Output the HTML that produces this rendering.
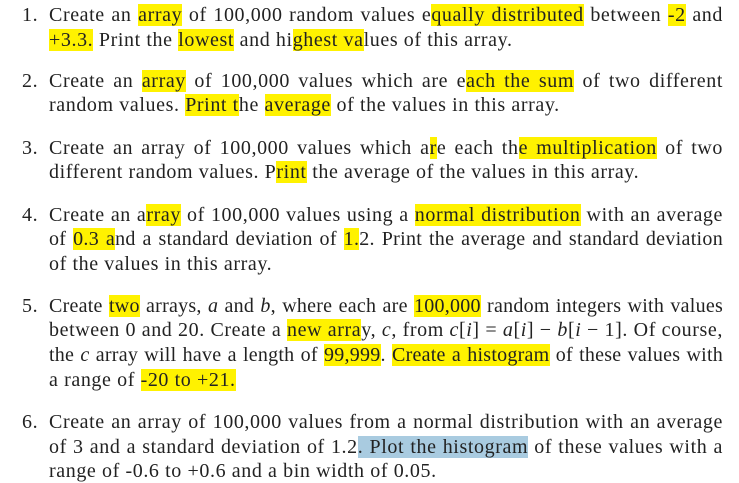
<!DOCTYPE html>
<html><head><style>
html,body{margin:0;padding:0;background:#fff;width:739px;height:483px;overflow:hidden}
body{font-family:"Liberation Serif",serif;font-size:20px;letter-spacing:0.6px;color:#222;position:relative}
.l{position:absolute;left:49px;width:674px;line-height:24px;height:24px;white-space:nowrap;text-align:justify;text-align-last:justify}
.l.e{text-align-last:left}
.l.t{letter-spacing:0.3px}
.n{position:absolute;left:22px;line-height:24px}
.h{background:#fff200}
.b{background:#a9cbe0}
i{font-style:italic}
</style></head><body>
<div class="n" style="top:3px">1.</div>
<div class="l" style="top:3px">Create an <span class="h">array</span> of 100,000 random values e<span class="h">qually distributed</span> between <span class="h">-2</span> and</div>
<div class="l e" style="top:28px"><span class="h">+3.3.</span> Print the <span class="h">lowest</span> and hi<span class="h">ghest va</span>lues of this array.</div>

<div class="n" style="top:69px">2.</div>
<div class="l" style="top:69px">Create an <span class="h">array</span> of 100,000 values which are e<span class="h">ach the sum</span> of two different</div>
<div class="l e" style="top:93px">random values. <span class="h">Print t</span>he <span class="h">average</span> of the values in this array.</div>

<div class="n" style="top:136px">3.</div>
<div class="l" style="top:136px">Create an array of 100,000 values which a<span class="h">r</span>e each th<span class="h">e multiplication</span> of two</div>
<div class="l e" style="top:160px">different random values. P<span class="h">rint</span> the average of the values in this array.</div>

<div class="n" style="top:203px">4.</div>
<div class="l" style="top:203px">Create an a<span class="h">rray</span> of 100,000 values using a <span class="h">normal distribution</span> with an average</div>
<div class="l t" style="top:227px">of <span class="h">0.3 a</span>nd a standard deviation of <span class="h">1.</span>2. Print the average and standard deviation</div>
<div class="l e" style="top:252px">of the values in this array.</div>

<div class="n" style="top:294px">5.</div>
<div class="l t" style="top:294px;letter-spacing:0.25px">Create <span class="h">two</span> arrays, <i>a</i> and <i>b</i>, where each are <span class="h">100,000</span> random integers with values</div>
<div class="l" style="top:318px">between 0 and 20. Create a <span class="h">new arra</span>y, <i>c</i>, from <i>c</i>[<i>i</i>] = <i>a</i>[<i>i</i>] &minus; <i>b</i>[<i>i</i> &minus; 1]. Of course,</div>
<div class="l t" style="top:343px;letter-spacing:0.25px">the <i>c</i> array will have a length of <span class="h">99,999</span>. <span class="h">Create a histogram</span> of these values with</div>
<div class="l e" style="top:368px">a range of <span class="h">-20 to +21.</span></div>

<div class="n" style="top:410px">6.</div>
<div class="l" style="top:410px">Create an array of 100,000 values from a normal distribution with an average</div>
<div class="l" style="top:435px">of 3 and a standard deviation of 1.2<span class="b">. Plot the histogram</span> of these values with a</div>
<div class="l e" style="top:459px">range of -0.6 to +0.6 and a bin width of 0.05.</div>
</body></html>
